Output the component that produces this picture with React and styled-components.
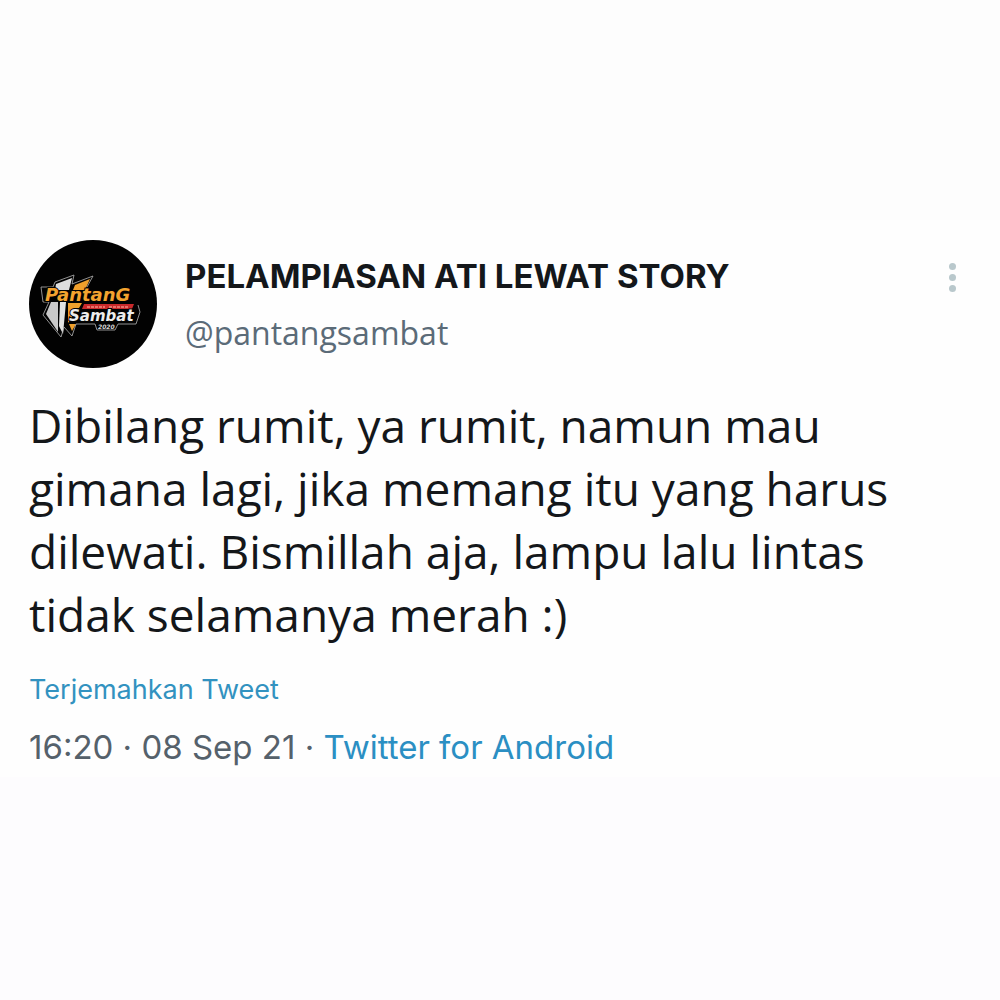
import React from "react";
import styled, { createGlobalStyle } from "styled-components";

const GlobalStyle = createGlobalStyle`
  *, *::before, *::after { box-sizing: border-box; }
  body {
    margin: 0;
    background: #fdfcfe;
    color: #14171a;
    font-family: Inter, "Open Sans", "Noto Sans", sans-serif;
  }
`;

const Page = styled.main`
  display: flex;
  flex-direction: column;
  min-height: 100vh;
  background: linear-gradient(#fdfdfd 50%, #fdfcfe 50%);
  padding: 220px 0;
`;

const Tweet = styled.article`
  display: flex;
  flex-direction: column;
  padding: 20px 29px 8px;
  background: #fefefe;
`;

const Header = styled.header`
  display: flex;
  align-items: flex-start;
  gap: 28px;
`;

const Avatar = styled.svg`
  flex: none;
  width: 128px;
  height: 128px;
`;

const Author = styled.div`
  display: flex;
  flex: 1;
  flex-direction: column;
  padding-top: 8px;
`;

const Name = styled.h1`
  margin: 0;
  font-size: 33px;
  font-weight: 700;
  line-height: 56px;
`;

const Handle = styled.a`
  color: #5b6b78;
  font-family: "Open Sans", "Noto Sans", sans-serif;
  font-size: 32px;
  line-height: 58px;
  text-decoration: none;
`;

const MenuButton = styled.button`
  display: flex;
  flex-direction: column;
  align-items: center;
  gap: 4px;
  margin: 15px 7px 0 0;
  padding: 8px;
  border: 0;
  background: none;
  cursor: pointer;
`;

const Dot = styled.span`
  width: 7px;
  height: 7px;
  border-radius: 50%;
  background: #b9c8cc;
`;

const Message = styled.p`
  margin: 26px 0 0;
  font-family: "Open Sans", "Noto Sans", sans-serif;
  font-size: 46px;
  line-height: 63px;
`;

const Translate = styled.a`
  align-self: flex-start;
  margin-top: 24px;
  color: #3292c0;
  font-size: 27px;
  line-height: 40px;
  text-decoration: none;
`;

const Meta = styled.div`
  margin-top: 15px;
  color: #55616b;
  font-size: 33px;
  line-height: 44px;
`;

const Source = styled.a`
  color: #2b8fc3;
  text-decoration: none;
`;

const LogoText = styled.text`
  font-family: "DejaVu Sans", sans-serif;
  font-size: ${(p) => p.$size}px;
  font-weight: 700;
  font-style: italic;
`;

function Logo() {
  return (
    <Avatar viewBox="0 0 128 128" role="img" aria-label="Pantang Sambat">
      <circle cx="64" cy="64" r="64" fill="#020202" />
      <path d="M27 44 43 38 40 50H26z" fill="#dedede" />
      <path d="M46 45 61 39 56 50H44z" fill="#f0a02c" />
      <path d="M22 62H29L29 92 17 74z" fill="#c9c9c9" />
      <path d="M31 62H37L34 94 30 86z" fill="#e2e2e2" />
      <path d="M39 63H53L50 68H45L43 77 39 83z" fill="#f0a02c" />
      <path d="M40 84H47L43 91z" fill="#f0a02c" />
      <g fill="none" stroke="#b4b4b4" strokeWidth=".8">
        <path d="M14 62 12 47H24L26 42 45 35 43 44 64 36 58 47" />
        <path d="M14 62H20L14 75 32 97 35 87 43 96 47 84H66M89 84H107L111 72 109 65" />
        <path d="M66 84 68 90H86L89 84" />
      </g>
      <LogoText $size={18} x="16" y="61" fill="#f3a32f" stroke="#020202" strokeWidth="2" paintOrder="stroke">
        PantanG
      </LogoText>
      <path d="M55 64H105L103 69H53z" fill="#c9292b" />
      <path d="M58 67H76M80 67H99" stroke="#ef8c80" strokeWidth="1.5" strokeDasharray="3 1" />
      <LogoText $size={15} x="40" y="81" fill="#ededed" stroke="#020202" strokeWidth="2" paintOrder="stroke">
        Sambat
      </LogoText>
      <LogoText $size={6} x="69" y="89" fill="#d8d8d8">
        2020
      </LogoText>
    </Avatar>
  );
}

export default function App() {
  return (
    <>
      <GlobalStyle />
      <Page>
        <Tweet>
          <Header>
            <Logo />
            <Author>
              <Name>PELAMPIASAN ATI LEWAT STORY</Name>
              <Handle href="#profile">@pantangsambat</Handle>
            </Author>
            <MenuButton type="button" aria-label="Menu">
              <Dot />
              <Dot />
              <Dot />
            </MenuButton>
          </Header>
          <Message>
            Dibilang rumit, ya rumit, namun mau
            <br />
            gimana lagi, jika memang itu yang harus
            <br />
            dilewati. Bismillah aja, lampu lalu lintas
            <br />
            tidak selamanya merah :)
          </Message>
          <Translate href="#translate">Terjemahkan Tweet</Translate>
          <Meta>
            <time dateTime="2021-09-08T16:20">16:20 · 08 Sep 21</time> ·{" "}
            <Source href="#source">Twitter for Android</Source>
          </Meta>
        </Tweet>
      </Page>
    </>
  );
}
